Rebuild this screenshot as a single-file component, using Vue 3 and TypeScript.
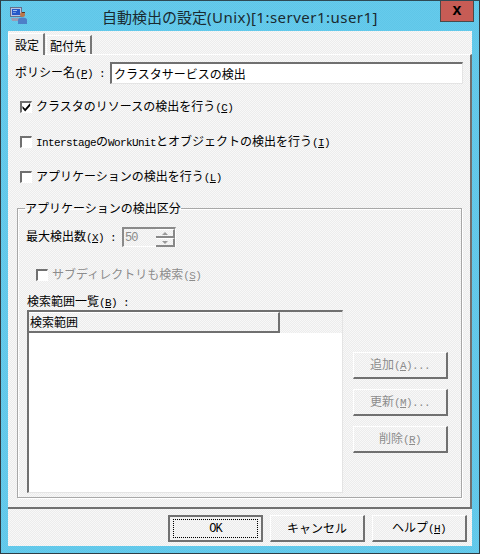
<script setup lang="ts">
const title = "自動検出の設定"
const titleLatin = "(Unix)[1:server1:user1]"
</script>

<template>
  <div class="window">
    <header class="titlebar">
      <svg class="appicon" width="17" height="17" viewBox="0 0 17 17">
        <rect x="0.500" y="0.500" width="11" height="9" fill="#b8c4e0" stroke="#66708c" />
        <rect x="2" y="2" width="8" height="6" fill="#2458c8" />
        <rect x="3" y="3" width="4" height="1" fill="#9fc0f0" />
        <rect x="3" y="5" width="3" height="1" fill="#6f98e0" />
        <path d="M1 11h9l2 3H2z" fill="#9a9cb4" />
        <circle cx="12.500" cy="7.500" r="2.500" fill="#b9764a" />
        <path d="M12 5h3v1h-3z" fill="#5a3420" />
        <path d="M8 17v-4q0-2.500 4.500-2.500t4.500 2.500v4z" fill="#4d80c8" />
      </svg>
      <span class="title">{{ title }}<span class="titlelatin">{{ titleLatin }}</span></span>
      <button class="close">x</button>
    </header>
    <div class="client">
      <div class="tabs">
        <div class="tab active">設定</div>
        <div class="tab">配付先</div>
      </div>
      <section class="panel">
        <div class="policy jp">
          <label>ポリシー名<span class="lat">(<u>P</u>) : </span></label>
          <div class="field">クラスタサービスの検出</div>
        </div>
        <div class="check first jp">
          <span class="box"><svg width="10" height="10" viewBox="0 0 10 10"><path d="M0.500 4l3 3 5.500-6.500v3.500l-5.500 6-3-3.500z" fill="#000" /></svg></span>
          <span>クラスタのリソースの検出を行う<span class="lat">(<u>C</u>)</span></span>
        </div>
        <div class="check jp">
          <span class="box"></span>
          <span><span class="lat">Interstage</span>の<span class="lat">WorkUnit</span>とオブジェクトの検出を行う<span class="lat">(<u>I</u>)</span></span>
        </div>
        <div class="check jp">
          <span class="box"></span>
          <span>アプリケーションの検出を行う<span class="lat">(<u>L</u>)</span></span>
        </div>
        <fieldset class="group">
          <legend class="jp">アプリケーションの検出区分</legend>
          <div class="maxrow jp">
            <span class="maxlabel">最大検出数<span class="lat">(<u>X</u>) : </span></span>
            <div class="spin">
              <span class="lat big spinval">50</span>
              <div class="arrows">
                <span class="arrow"><i class="up"></i></span>
                <span class="arrow"><i class="down"></i></span>
              </div>
            </div>
          </div>
          <div class="check sub disabled jp">
            <span class="box"></span>
            <span>サブディレクトリも検索<span class="lat">(<u>S</u>)</span></span>
          </div>
          <div class="listlabel jp">検索範囲一覧<span class="lat">(<u>B</u>) : </span></div>
          <div class="listrow">
            <div class="list">
              <div class="listhead">
                <div class="col1 jp">検索範囲</div>
                <div class="col2"></div>
              </div>
            </div>
            <div class="sidebtns">
              <button class="btn disabled jp"><span>追加<span class="lat">(<u>A</u>)...</span></span></button>
              <button class="btn disabled jp"><span>更新<span class="lat">(<u>M</u>)...</span></span></button>
              <button class="btn disabled jp"><span>削除<span class="lat">(<u>R</u>)</span></span></button>
            </div>
          </div>
        </fieldset>
      </section>
      <footer class="footer">
        <button class="btn default"><span class="focus lat big">OK</span></button>
        <button class="btn jp">キャンセル</button>
        <button class="btn jp"><span>ヘルプ<span class="lat">(<u>H</u>)</span></span></button>
      </footer>
    </div>
  </div>
</template>

<style>
html, body { margin: 0; padding: 0; background: #62c8ea; }
</style>

<style scoped>
.window {
  width: 480px;
  height: 554px;
  box-sizing: border-box;
  border: 1px solid #2f3c44;
  border-top-color: #2f4a55;
  background-color: #62c8ea;
  background-image: repeating-conic-gradient(#66cbec 0 25%, #5fc6e8 0 50%);
  background-size: 2px 2px;
  padding: 0 7px 7px;
  display: flex;
  flex-direction: column;
  overflow: hidden;
}
.titlebar {
  height: 30px;
  position: relative;
  display: flex;
  align-items: center;
  justify-content: center;
  flex: none;
}
.appicon { position: absolute; left: 2px; top: 6px; }
.title {
  font-family: "Noto Sans", "Noto Sans CJK JP", sans-serif;
  font-size: 15px;
  color: #1a2a30;
  white-space: nowrap;
}
.titlelatin { letter-spacing: 0.48px; }
.close {
  position: absolute;
  right: -2px;
  top: 0;
  width: 34px;
  height: 21px;
  background: #c75c55;
  border: 1px solid #4a4a4a;
  border-top: 0;
  padding: 0 0 3px;
  font: bold 16px "Liberation Sans", sans-serif;
  color: #000;
}
.client {
  flex: 1;
  min-height: 0;
  color: #000;
  background-color: #f0f0f0;
  background-image: repeating-conic-gradient(#f8f8f8 0 25%, #ececec 0 50%);
  background-size: 2px 2px;
  display: flex;
  flex-direction: column;
}
.jp {
  font-family: "Noto Sans CJK JP", sans-serif;
  font-size: 12px;
  line-height: 14px;
}
.lat {
  font-family: "Liberation Mono", monospace;
  font-size: 11px;
  letter-spacing: -0.6px;
  white-space: pre;
}
.lat.big { font-size: 12px; letter-spacing: -1px; }
.tabs {
  height: 23px;
  display: flex;
  align-items: flex-end;
  flex: none;
}
.tab {
  font-family: "Noto Sans CJK JP", sans-serif;
  font-size: 12px;
  line-height: 14px;
  height: 19px;
  box-sizing: border-box;
  white-space: nowrap;
  border-left: 1px solid #fff;
  border-top: 1px solid #fff;
  border-right: 2px solid #777;
  width: 46px;
  padding: 3px 0 0 3px;
}
.tab.active {
  height: 22px;
  width: 37px;
  padding: 4px 0 0 6px;
  margin-right: 1px;
  margin-bottom: -1px;
  position: relative;
  z-index: 1;
  background: #f2f2f2;
}
.panel {
  height: 455px;
  box-sizing: border-box;
  border-top: 1px solid #fff;
  border-right: 2px solid #707070;
  border-bottom: 2px solid #707070;
  padding: 6px 7px 0 7px;
  display: flex;
  flex-direction: column;
  flex: none;
}
.policy {
  display: flex;
  align-items: center;
  height: 23px;
  flex: none;
}
.policy label { width: 95px; flex: none; white-space: nowrap; }
.field {
  width: 353px;
  height: 22px;
  box-sizing: border-box;
  background: #fff;
  border-top: 2px solid #707070;
  border-left: 2px solid #707070;
  border-right: 1px solid #e4e4e4;
  border-bottom: 1px solid #e4e4e4;
  padding: 3px 0 0 2px;
}
.check {
  display: flex;
  align-items: center;
  height: 14px;
  margin-top: 21px;
  margin-left: 5px;
  flex: none;
  white-space: nowrap;
}
.check.first { margin-top: 16px; }
.box {
  width: 12px;
  height: 12px;
  box-sizing: border-box;
  border-top: 2px solid #707070;
  border-left: 2px solid #707070;
  border-right: 1px solid #fff;
  border-bottom: 1px solid #fff;
  background: #fff;
  margin-right: 4px;
  display: flex;
  flex: none;
}
.box svg { display: block; margin: -1px 0 0 0; }
.group {
  margin: 17px 0 0 2px;
  padding: 0 9px;
  width: 445px;
  height: 297px;
  box-sizing: border-box;
  border: 1px solid #a8a8a8;
  box-shadow: inset 1px 1px 0 #fff, 1px 1px 0 #fff;
  min-width: 0;
  flex: none;
}
legend { padding: 0; margin-left: -2px; height: 14px; }
.maxrow {
  display: flex;
  align-items: center;
  height: 20px;
  margin-top: 12px;
}
.maxlabel { width: 95px; flex: none; margin-left: -1px; margin-right: 1px; white-space: nowrap; }
.spin {
  width: 54px;
  height: 20px;
  box-sizing: border-box;
  border-top: 2px solid #8a8a8a;
  border-left: 2px solid #8a8a8a;
  border-right: 1px solid #fff;
  border-bottom: 1px solid #fff;
  display: flex;
  align-items: flex-start;
  justify-content: space-between;
}
.spinval { color: #8a8a8a; padding: 2px 0 0 1px; }
.arrows {
  width: 19px;
  height: 18px;
  display: flex;
  flex-direction: column;
}
.arrow {
  flex: 1;
  box-sizing: border-box;
  border-top: 1px solid #fff;
  border-bottom: 2px solid #888;
  border-right: 2px solid #888;
  display: flex;
  align-items: center;
  justify-content: center;
}
.arrow i { width: 0; height: 0; border-left: 3px solid transparent; border-right: 3px solid transparent; }
.arrow .up { border-bottom: 3px solid #999; }
.arrow .down { border-top: 3px solid #999; }
.check.sub { margin: 21px 0 0 9px; }
.disabled { color: #8c8c8c; }
.listlabel { margin-top: 12px; height: 14px; white-space: nowrap; }
.listrow {
  display: flex;
  margin-top: 2px;
}
.list {
  width: 316px;
  height: 183px;
  box-sizing: border-box;
  background: #fff;
  border-top: 2px solid #707070;
  border-left: 2px solid #707070;
  border-right: 1px solid #e4e4e4;
  border-bottom: 1px solid #e4e4e4;
  flex: none;
}
.listhead {
  display: flex;
  height: 21px;
  background-color: #f0f0f0;
  background-image: repeating-conic-gradient(#f8f8f8 0 25%, #ececec 0 50%);
  background-size: 2px 2px;
}
.col1 {
  width: 251px;
  padding: 2px 0 0 1px;
  border-right: 2px solid #707070;
  border-bottom: 2px solid #707070;
  border-top: 1px solid #fff;
  box-sizing: border-box;
}
.col2 { flex: 1; }
.sidebtns {
  display: flex;
  flex-direction: column;
  gap: 10px;
  margin: 42px 0 0 10px;
}
.btn {
  width: 95px;
  height: 27px;
  box-sizing: border-box;
  padding: 0;
  color: #000;
  background: transparent;
  border-top: 1px solid #fff;
  border-left: 1px solid #fff;
  border-right: 2px solid #707070;
  border-bottom: 2px solid #707070;
  display: flex;
  align-items: center;
  justify-content: center;
  white-space: nowrap;
}
.btn.disabled { color: #8c8c8c; }
.footer {
  display: flex;
  gap: 7px;
  padding: 6px 5px 0 0;
  justify-content: flex-end;
}
.btn.default { border: 2px solid #707070; }
.focus {
  display: flex;
  align-items: center;
  justify-content: center;
  width: 85px;
  height: 19px;
  border: 1px dotted #000;
  box-sizing: border-box;
}
</style>
